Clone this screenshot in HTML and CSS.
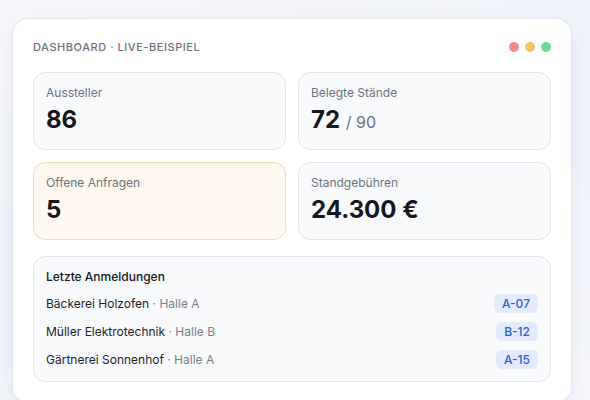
FILE: index.html
```html
<!DOCTYPE html>
<html lang="de">
<head>
    <meta charset="UTF-8">
    <meta name="viewport" content="width=device-width, initial-scale=1.0">
    <title>Dashboard · Live-Beispiel</title>
    <link rel="stylesheet" href="styles.css">
</head>
<body>
    <div class="panel">
        <div class="panel-header">
            <span class="panel-title">Dashboard · Live-Beispiel</span>
            <div class="window-dots">
                <span class="wdot red"></span>
                <span class="wdot yellow"></span>
                <span class="wdot green"></span>
            </div>
        </div>

        <!-- Kennzahlen -->
        <div class="stats">
            <div class="stat">
                <div class="stat-label">Aussteller</div>
                <div class="stat-value">86</div>
            </div>
            <div class="stat">
                <div class="stat-label">Belegte Stände</div>
                <div class="stat-value">72 <span class="stat-sub">/ 90</span></div>
            </div>
            <div class="stat highlight">
                <div class="stat-label">Offene Anfragen</div>
                <div class="stat-value">5</div>
            </div>
            <div class="stat">
                <div class="stat-label">Standgebühren</div>
                <div class="stat-value">24.300 €</div>
            </div>
        </div>

        <!-- Letzte Anmeldungen -->
        <div class="recent">
            <div class="recent-title">Letzte Anmeldungen</div>
            <ul class="recent-list">
                <li>
                    <span>Bäckerei Holzofen <span class="hall">· Halle A</span></span>
                    <span class="badge">A-07</span>
                </li>
                <li>
                    <span>Müller Elektrotechnik <span class="hall">· Halle B</span></span>
                    <span class="badge">B-12</span>
                </li>
                <li>
                    <span>Gärtnerei Sonnenhof <span class="hall">· Halle A</span></span>
                    <span class="badge">A-15</span>
                </li>
            </ul>
        </div>
    </div>
</body>
</html>
```

FILE: styles.css
```css
body {
    margin: 0;
    font-family: Inter, "Noto Sans", Arial, sans-serif;
    background: linear-gradient(160deg, #f6f7fb 0%, #eef1f9 45%, #f4f6fb 100%);
    height: 400px;
    overflow: hidden;
    padding: 18px 0 0 12px;
    box-sizing: border-box;
    color: #16181d;
}

.panel {
    width: 560px;
    box-sizing: border-box;
    background-color: #fff;
    border: 1px solid #e2e5eb;
    border-radius: 16px;
    padding: 20px;
    box-shadow: 0 4px 18px rgba(30, 40, 80, 0.05);
}

.panel-header {
    display: flex;
    justify-content: space-between;
    align-items: center;
    height: 16px;
    margin-bottom: 17px;
}

.panel-title {
    font-size: 11px;
    font-weight: 500;
    text-transform: uppercase;
    letter-spacing: 0.05em;
    color: #6b7280;
}

.window-dots {
    display: flex;
    gap: 6px;
}

.wdot {
    width: 10px;
    height: 10px;
    border-radius: 50%;
}

.red { background-color: #ec8b8b; }
.yellow { background-color: #f6c163; }
.green { background-color: #6fd599; }

.stats {
    display: grid;
    grid-template-columns: 1fr 1fr;
    gap: 12px;
}

.stat {
    height: 78px;
    box-sizing: border-box;
    background-color: #f9fafc;
    border: 1px solid #e2e5eb;
    border-radius: 12px;
    padding: 12px 12px;
}

.stat.highlight {
    background-color: #fef8ef;
    border-color: #f4dcb0;
}

.stat-label {
    font-size: 12px;
    line-height: 16px;
    color: #6b7280;
    margin-bottom: 4px;
}

.stat-value {
    font-size: 24px;
    line-height: 30px;
    font-weight: 700;
    color: #15171c;
}

.stat-sub {
    font-size: 16px;
    font-weight: 400;
    color: #6b7280;
}

.recent {
    margin-top: 16px;
    background-color: #f9fafc;
    border: 1px solid #e2e5eb;
    border-radius: 12px;
    padding: 12px;
}

.recent-title {
    font-size: 12px;
    line-height: 16px;
    font-weight: 500;
    color: #15171c;
    margin-bottom: 8px;
}

.recent-list {
    list-style: none;
    margin: 0;
    padding: 0;
    display: flex;
    flex-direction: column;
    gap: 8px;
}

.recent-list li {
    display: flex;
    justify-content: space-between;
    align-items: center;
    height: 20px;
    font-size: 12px;
    color: #1f2329;
}

.hall {
    color: #7b818c;
}

.badge {
    background-color: #e2eafc;
    color: #2a5fd3;
    font-size: 12px;
    font-weight: 500;
    line-height: 19px;
    padding: 0 8px;
    border-radius: 6px;
}
```
